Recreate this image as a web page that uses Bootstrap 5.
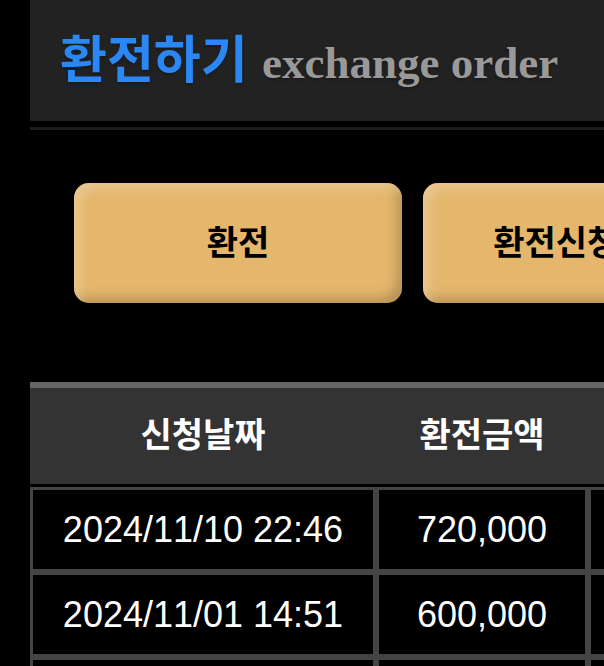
<!DOCTYPE html>
<html lang="ko">
<head>
<meta charset="utf-8">
<meta name="viewport" content="width=device-width, initial-scale=1">
<title>환전하기</title>
<link rel="stylesheet" href="https://cdn.jsdelivr.net/npm/bootstrap@5.3.0/dist/css/bootstrap.min.css">
<style>
body { background: #000; color: #fff; font-family: "Liberation Sans", "Noto Sans CJK KR", sans-serif; }
.page-wrap { padding-left: 30px; }
.title-bar { background: #222; padding: 20px 30px 29px; }
.title-rule { border-bottom: 3px solid #1c1c1c; padding-bottom: 6px; }
.page-title { font: 700 51px/72px "Noto Sans CJK KR", sans-serif; color: #2b87f3; text-shadow: 0 2px 3px rgba(0,0,0,.25); }
.page-title small { font: 700 45px/48px "Liberation Serif", serif; color: #999; }
.actions { padding: 53px 44px 79px; gap: 21px; }
.btn-gold { flex: 0 0 328px; height: 120px; padding: 0 0 4px; border: 0; border-radius: 15px; background: #e4b76d; color: #000;
  font: 700 34px/48px "Noto Sans CJK KR", sans-serif;
  box-shadow: inset 8px 8px 12px -3px rgba(238,211,168,.65), inset -8px -8px 12px -3px rgba(140,110,62,.5); }
.btn-gold:hover, .btn-gold:active { background: #ecc37e; color: #000; }
.history { width: 936px; table-layout: fixed; border-collapse: separate; border-spacing: 0; }
.history col.date { width: 346px; }
.history col.amount { width: 212px; }
.history th { height: 102px; padding: 0 0 6px; background: #333; border-top: 6px solid #666;
  font: 700 34px/48px "Noto Sans CJK KR", sans-serif; }
.history .spacer td { height: 3px; padding: 0; border: 0; line-height: 0; }
.history td { height: 85px; padding: 0; border: 3px solid #444; font-size: 36px; line-height: 48px; font-kerning: none; }
</style>
<script src="https://cdn.jsdelivr.net/npm/bootstrap@5.3.0/dist/js/bootstrap.bundle.min.js"></script>
</head>
<body class="overflow-hidden">
<div class="page-wrap">
  <header class="title-rule">
    <div class="title-bar text-nowrap">
      <h1 class="page-title m-0">환전하기 <small>exchange order</small></h1>
    </div>
  </header>
  <main>
    <div class="actions d-flex">
      <button type="button" class="btn btn-gold text-nowrap">환전</button>
      <button type="button" class="btn btn-gold text-nowrap">환전신청내역</button>
    </div>
    <table class="history text-center text-nowrap align-middle">
      <colgroup><col class="date"><col class="amount"><col></colgroup>
      <thead>
        <tr><th scope="col">신청날짜</th><th scope="col">환전금액</th><th scope="col"></th></tr>
      </thead>
      <tbody>
        <tr class="spacer" aria-hidden="true"><td colspan="3"></td></tr>
        <tr><td>2024/11/10 22:46</td><td>720,000</td><td></td></tr>
        <tr><td>2024/11/01 14:51</td><td>600,000</td><td></td></tr>
        <tr><td></td><td></td><td></td></tr>
      </tbody>
    </table>
  </main>
</div>
</body>
</html>
